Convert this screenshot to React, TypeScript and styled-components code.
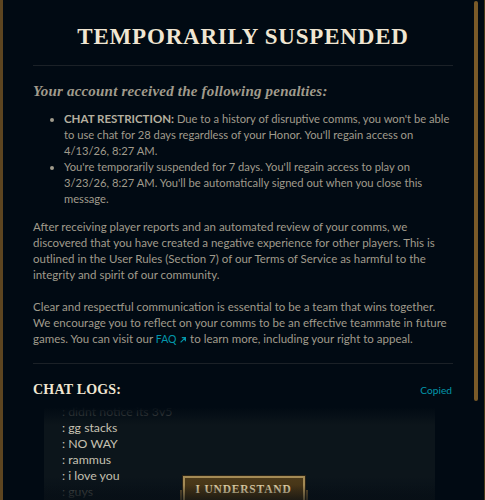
import * as React from 'react';
import styled, { createGlobalStyle } from 'styled-components';

const GlobalStyle = createGlobalStyle`
    html, body {
        margin: 0;
        padding: 0;
        background: #010a13;
    }
    * {
        box-sizing: border-box;
    }
`;

const chatLines = [
    { text: ': didnt notice its 3v5', faded: true },
    { text: ': gg stacks' },
    { text: ': NO WAY' },
    { text: ': rammus' },
    { text: ': i love you' },
    { text: ': guys', faded: true },
];

const App = () => {
    return (
        <Modal>
            <GlobalStyle />
            <Content>
                <Title>Temporarily Suspended</Title>
                <Divider />
                <Subtitle>Your account received the following penalties:</Subtitle>
                <PenaltyList>
                    <li>
                        <Strong>CHAT RESTRICTION:</Strong> Due to a history of disruptive comms, you won't be able
                        to use chat for 28 days regardless of your Honor. You'll regain access on 4/13/26, 8:27 AM.
                    </li>
                    <li>
                        You're temporarily suspended for 7 days. You'll regain access to play on 3/23/26, 8:27 AM.
                        You'll be automatically signed out when you close this message.
                    </li>
                </PenaltyList>
                <Paragraph>
                    After receiving player reports and an automated review of your comms, we discovered that you
                    have created a negative experience for other players. This is outlined in the User Rules
                    (Section 7) of our Terms of Service as harmful to the integrity and spirit of our community.
                </Paragraph>
                <Paragraph>
                    Clear and respectful communication is essential to be a team that wins together. We encourage
                    you to reflect on your comms to be an effective teammate in future games. You can visit
                    our <FaqLink>FAQ <ArrowIcon /></FaqLink> to learn more, including your right to appeal.
                </Paragraph>
                <Divider $gap={16} />
                <LogsHeader>
                    <LogsTitle>Chat Logs:</LogsTitle>
                    <Copied>Copied</Copied>
                </LogsHeader>
                <ChatBox>
                    <ChatInner>
                        {chatLines.map((line, i) => (
                            <ChatLine key={i} $faded={line.faded}>{line.text}</ChatLine>
                        ))}
                    </ChatInner>
                </ChatBox>
            </Content>
            <ScrollThumb />
            <Footer>
                <Bracket $side="left" />
                <UnderstandButton>I Understand</UnderstandButton>
                <Bracket $side="right" />
            </Footer>
        </Modal>
    );
};

const ArrowIcon = () => (
    <svg width="8" height="8" viewBox="0 0 10 10" fill="none" stroke="currentColor" strokeWidth="1.5">
        <path d="M2 8 L8 2 M3.5 2 H8 V6.5" />
    </svg>
);

const Modal = styled.div`
    position: relative;
    width: 485px;
    height: 500px;
    overflow: hidden;
    background: #010a13;
    border-left: 3px solid #5d4520;
    border-right: 1px solid #463714;
`;

const Content = styled.div`
    padding: 24px 31px 0 30px;
    display: flex;
    flex-direction: column;
`;

const Title = styled.h1`
    margin: 0;
    text-align: center;
    font-family: "Liberation Serif", "DejaVu Serif", serif;
    font-weight: 700;
    font-size: 23px;
    line-height: 26px;
    letter-spacing: 0.8px;
    text-transform: uppercase;
    color: #f0e6d2;
`;

const Divider = styled.div<{ $gap?: number }>`
    height: 1px;
    background: #1b2127;
    margin: ${(p) => p.$gap ?? 15}px 0;
`;

const Subtitle = styled.h2`
    margin: 0 0 10px;
    font-family: "Liberation Serif", "DejaVu Serif", serif;
    font-style: italic;
    font-weight: 700;
    font-size: 15px;
    line-height: 20px;
    letter-spacing: 0.2px;
    color: #a09b8c;
`;

const bodyText = `
    font-family: Lato, "Noto Sans", sans-serif;
    font-size: 11.5px;
    line-height: 16px;
    color: #a09b8c;
`;

const PenaltyList = styled.ul`
    margin: 0 0 12px;
    padding-left: 31px;
    ${bodyText}
    font-size: 11.2px;

    li::marker {
        font-size: 11px;
    }
`;

const Strong = styled.span`
    font-weight: 700;
    font-size: 11.5px;
    color: #b5af9f;
`;

const Paragraph = styled.p`
    margin: 0 0 16px;
    ${bodyText}

    &:last-of-type {
        margin-bottom: 0;
    }
`;

const FaqLink = styled.span`
    color: #0397ab;
    font-size: 10.5px;
    white-space: nowrap;

    svg {
        vertical-align: -1px;
    }
`;

const LogsHeader = styled.div`
    display: flex;
    justify-content: space-between;
    align-items: center;
    padding-right: 1px;
`;

const LogsTitle = styled.h3`
    margin: 0;
    font-family: "Liberation Serif", "DejaVu Serif", serif;
    font-weight: 700;
    font-size: 14px;
    line-height: 20px;
    letter-spacing: 0.2px;
    text-transform: uppercase;
    color: #f0e6d2;
`;

const Copied = styled.span`
    font-family: Lato, "Noto Sans", sans-serif;
    font-size: 10.2px;
    color: #0397ab;
`;

const ChatBox = styled.div`
    position: relative;
    margin: 7px 18px 0 11px;
    height: 120px;
    overflow: hidden;
    background: #0c151b;

    &::before,
    &::after {
        content: '';
        position: absolute;
        left: 0;
        right: 0;
        height: 18px;
        z-index: 1;
    }

    &::before {
        top: 0;
        background: linear-gradient(#010a13, rgba(12, 21, 27, 0));
    }

    &::after {
        top: 78px;
        background: linear-gradient(rgba(8, 15, 21, 0), rgba(8, 15, 21, 0.7));
    }
`;

const ChatInner = styled.div`
    margin-top: -3px;
    padding-left: 18px;
`;

const ChatLine = styled.div<{ $faded?: boolean }>`
    font-family: Lato, "Noto Sans", sans-serif;
    font-size: 12.3px;
    line-height: 16px;
    color: ${(p) => (p.$faded ? '#5f5f5a' : '#c6c1b2')};
`;

const ScrollThumb = styled.div`
    position: absolute;
    top: 1px;
    right: 6px;
    width: 4px;
    height: 400px;
    border-radius: 2px;
    background: #7a5a28;
`;

const Footer = styled.div`
    position: absolute;
    left: 0;
    right: 0;
    bottom: 0;
    height: 24px;
    display: flex;
    justify-content: center;
    align-items: flex-start;
    background: linear-gradient(rgba(1, 10, 19, 0), rgba(1, 10, 19, 0.5));
`;

const UnderstandButton = styled.button`
    width: 122px;
    height: 30px;
    margin: 0;
    padding: 0 0 5px;
    border: 2px solid #a48a55;
    outline: 1px solid #2a2316;
    background: linear-gradient(#4c3a1a, #3b2b12);
    font-family: "Liberation Serif", "DejaVu Serif", serif;
    font-weight: 700;
    font-size: 11.5px;
    letter-spacing: 0.8px;
    text-transform: uppercase;
    color: #dccca4;
`;

const Bracket = styled.div<{ $side: 'left' | 'right' }>`
    width: 2px;
    height: 10px;
    margin-top: 14px;
    background: #5b4a2c;
    margin-${(p) => (p.$side === 'left' ? 'right' : 'left')}: 1px;
`;

export default App;
